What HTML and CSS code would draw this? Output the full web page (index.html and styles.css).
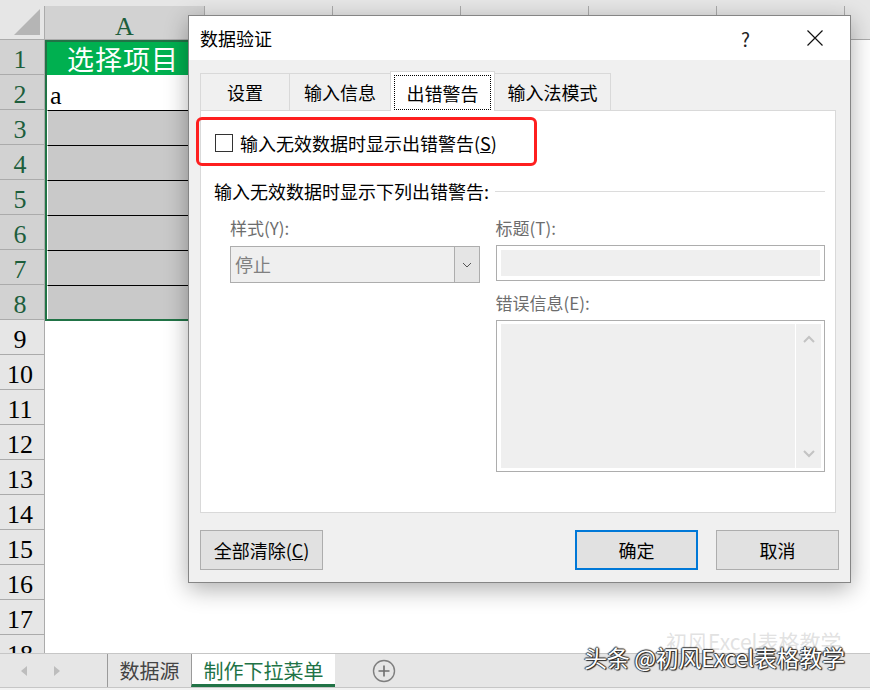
FILE: index.html
```html
<!DOCTYPE html>
<html lang="zh-CN">
<head>
    <meta charset="UTF-8">
    <title>数据验证</title>
    <link rel="stylesheet" href="styles.css">
</head>
<body>
    <div class="sheet">
        <div class="top-strip"></div>
        <div class="col-heads">
            <div class="corner">
                <svg width="28" height="28" viewBox="0 0 28 28"><polygon points="27,1 27,27 1,27" fill="#b5b5b5"/></svg>
            </div>
            <div class="col-head sel">A</div>
            <div class="col-head"></div>
            <div class="col-head"></div>
            <div class="col-head"></div>
            <div class="col-head"></div>
            <div class="col-head"></div>
            <div class="col-head"></div>
        </div>
        <div class="grid">
            <div class="row-heads">
                <div class="rh sel">1</div>
                <div class="rh sel">2</div>
                <div class="rh sel">3</div>
                <div class="rh sel">4</div>
                <div class="rh sel">5</div>
                <div class="rh sel">6</div>
                <div class="rh sel">7</div>
                <div class="rh sel">8</div>
                <div class="rh">9</div>
                <div class="rh">10</div>
                <div class="rh">11</div>
                <div class="rh">12</div>
                <div class="rh">13</div>
                <div class="rh">14</div>
                <div class="rh">15</div>
                <div class="rh">16</div>
                <div class="rh">17</div>
                <div class="rh">18</div>
            </div>
            <div class="cells">
                <div class="selection">
                    <div class="cell head-cell">选择项目</div>
                    <div class="cell value-cell">a</div>
                    <div class="cell filled"></div>
                    <div class="cell filled"></div>
                    <div class="cell filled"></div>
                    <div class="cell filled"></div>
                    <div class="cell filled"></div>
                    <div class="cell filled last"></div>
                </div>
            </div>
        </div>
        <div class="tab-bar">
            <div class="nav">
                <svg width="8" height="12" viewBox="0 0 8 12"><polygon points="7,1 7,11 1,6" fill="#bdbdbd"/></svg>
                <svg width="8" height="12" viewBox="0 0 8 12"><polygon points="1,1 1,11 7,6" fill="#bdbdbd"/></svg>
            </div>
            <div class="sheet-tab">数据源</div>
            <div class="sheet-tab active">制作下拉菜单</div>
            <div class="add-sheet">
                <svg width="24" height="24" viewBox="0 0 24 24"><circle cx="12" cy="12" r="10.5" fill="none" stroke="#7f7f7f" stroke-width="1.4"/><path d="M12 6.5v11M6.5 12h11" stroke="#6f6f6f" stroke-width="1.6"/></svg>
            </div>
        </div>
        <div class="status-line"></div>
    </div>

    <div class="dialog">
        <div class="dlg-title">
            <span class="dlg-name">数据验证</span>
            <span class="dlg-help">?</span>
            <svg class="dlg-close" width="16" height="16" viewBox="0 0 16 16"><path d="M0.5 0.5L15.5 15.5M15.5 0.5L0.5 15.5" stroke="#111" stroke-width="1.2"/></svg>
        </div>
        <div class="dlg-body">
            <div class="tabs">
                <div class="tab t1">设置</div>
                <div class="tab t2">输入信息</div>
                <div class="tab t3 active"><span class="focus">出错警告</span></div>
                <div class="tab t4">输入法模式</div>
            </div>
            <div class="panel">
                <div class="check-row">
                    <span class="checkbox"></span>
                    <span>输入无效数据时显示出错警告(<u>S</u>)</span>
                </div>
                <div class="group-head">
                    <span>输入无效数据时显示下列出错警告:</span>
                    <span class="group-line"></span>
                </div>
                <div class="form">
                    <div class="form-col left">
                        <div class="label">样式(Y):</div>
                        <div class="select">
                            <span class="select-text">停止</span>
                            <span class="select-btn">
                                <svg width="10" height="6" viewBox="0 0 10 6"><polyline points="1,1 5,5 9,1" fill="none" stroke="#555" stroke-width="1"/></svg>
                            </span>
                        </div>
                    </div>
                    <div class="form-col right">
                        <div class="label">标题(T):</div>
                        <div class="input"></div>
                        <div class="label second">错误信息(E):</div>
                        <div class="textarea">
                            <div class="text-fill"></div>
                            <div class="scroll">
                                <svg width="12" height="8" viewBox="0 0 12 8"><polyline points="1,7 6,2 11,7" fill="none" stroke="#c3c3c3" stroke-width="2"/></svg>
                                <svg width="12" height="8" viewBox="0 0 12 8"><polyline points="1,1 6,6 11,1" fill="none" stroke="#c3c3c3" stroke-width="2"/></svg>
                            </div>
                        </div>
                    </div>
                </div>
            </div>
            <div class="buttons">
                <button class="btn">全部清除(<u>C</u>)</button>
                <span class="spacer"></span>
                <button class="btn primary">确定</button>
                <button class="btn">取消</button>
            </div>
        </div>
    </div>

    <div class="highlight"></div>

    <div class="watermark">
        <span class="wm-faint">初风Excel表格教学</span>
        <span class="wm-main">头条 @初风Excel表格教学</span>
    </div>
</body>
</html>
```

FILE: styles.css
```css
body {
    margin: 0;
    width: 870px;
    height: 690px;
    overflow: hidden;
    position: relative;
    background: #fff;
    font-family: "Noto Sans CJK SC", sans-serif;
}

/* worksheet */
.top-strip {
    height: 6px;
    background: #e6e6e6;
}

.col-heads {
    display: flex;
    height: 34px;
    background: #e6e6e6;
    border-bottom: 1px solid #ababab;
    box-sizing: border-box;
}

.corner {
    width: 45px;
    flex: none;
    box-sizing: border-box;
    border-right: 1px solid #ababab;
    display: flex;
    align-items: flex-end;
    justify-content: flex-end;
    padding: 0 3px 3px 0;
}

.col-head {
    width: 128px;
    flex: none;
    box-sizing: border-box;
    border-right: 1px solid #ababab;
}

.col-head.sel {
    width: 160px;
    background: #d2d2d2;
    color: #1d5e3c;
    font-family: "Liberation Serif", serif;
    font-size: 26px;
    line-height: 33px;
    padding-top: 4px;
    box-sizing: border-box;
    text-align: center;
}

.grid {
    display: flex;
    height: 613px;
    overflow: hidden;
}

.row-heads {
    width: 45px;
    flex: none;
    background: #e6e6e6;
    border-right: 1px solid #ababab;
    box-sizing: border-box;
}

.rh {
    height: 35px;
    box-sizing: border-box;
    border-bottom: 1px solid #ababab;
    font-family: "Liberation Serif", serif;
    font-size: 26px;
    line-height: 34px;
    text-align: center;
    padding: 3px 4px 0 0;
    color: #000;
}

.rh.sel {
    background: #d2d2d2;
    color: #1d5e3c;
}

.cells {
    flex: 1;
}

.selection {
    width: 160px;
    border: 2px solid #217346;
    border-right: none;
}

.cell {
    height: 35px;
    box-sizing: border-box;
}

.head-cell {
    height: 33px;
    background: #00b050;
    color: #fff;
    font-family: "Liberation Serif", "Noto Sans CJK SC", serif;
    font-size: 27px;
    line-height: 33px;
    padding: 3px 0 0 20px;
    letter-spacing: 1px;
    overflow: hidden;
}

.value-cell {
    border-left: 1px solid #fff;
    font-family: "Liberation Serif", serif;
    font-size: 26px;
    line-height: 34px;
    padding: 4px 0 0 2px;
}

.filled {
    background: #c9c9c9;
    border-top: 1px solid #000;
    border-left: 1px solid #fff;
}

.filled.last {
    height: 34px;
}

.tab-bar {
    display: flex;
    align-items: center;
    height: 34px;
    background: #e6e6e6;
    border-top: 1px solid #c6c6c6;
    box-sizing: border-box;
}

.nav {
    width: 107px;
    flex: none;
    display: flex;
    gap: 25px;
    padding-left: 20px;
    box-sizing: border-box;
}

.sheet-tab {
    height: 33px;
    box-sizing: border-box;
    display: flex;
    align-items: center;
    justify-content: center;
    font-size: 20px;
    color: #444;
    border-left: 1px solid #9a9a9a;
    width: 84px;
}

.sheet-tab.active {
    width: 144px;
    background: #fff;
    color: #217346;
    border-bottom: 3px solid #217346;
    padding-top: 2px;
}

.add-sheet {
    margin-left: 37px;
    display: flex;
}

.status-line {
    height: 3px;
    border-top: 1px solid #c6c6c6;
    background: #f2f2f2;
}

/* dialog */
.dialog {
    position: absolute;
    left: 188px;
    top: 15px;
    width: 663px;
    height: 568px;
    box-sizing: border-box;
    border: 1px solid #858585;
    background: #f0f0f0;
    box-shadow: 0 6px 22px rgba(0, 0, 0, 0.32);
    display: flex;
    flex-direction: column;
}

.dlg-title {
    height: 44px;
    flex: none;
    background: #fff;
    display: flex;
    align-items: center;
    padding-left: 11px;
    font-size: 18px;
    color: #000;
}

.dlg-name {
    flex: 1;
}

.dlg-help {
    font-size: 19px;
    color: #222;
    margin-right: 57px;
}

.dlg-close {
    margin-right: 27px;
}

.dlg-body {
    padding: 11px 11px 0 11px;
}

.tabs {
    display: flex;
    align-items: flex-end;
    height: 39px;
}

.tab {
    height: 37px;
    box-sizing: border-box;
    border: 1px solid #d9d9d9;
    border-bottom: none;
    display: flex;
    align-items: center;
    justify-content: center;
    font-size: 18px;
    color: #000;
    margin-left: -1px;
}

.t1 { width: 90px; margin-left: 0; }
.t2 { width: 102px; }
.t3 { width: 105px; }
.t4 { width: 117px; }

.tab.active {
    height: 40px;
    margin-bottom: -1px;
    background: #fff;
    position: relative;
    z-index: 1;
    padding: 3px 3px 1px;
    align-items: stretch;
}

.focus {
    flex: 1;
    border: 1px dotted #000;
    display: flex;
    align-items: center;
    justify-content: center;
}

.panel {
    width: 636px;
    height: 403px;
    box-sizing: border-box;
    border: 1px solid #d9d9d9;
    background: #fff;
    padding: 21px 10px 0 14px;
}

.check-row {
    display: flex;
    align-items: center;
    gap: 7px;
    height: 22px;
    font-size: 18px;
    color: #000;
}

.checkbox {
    width: 18px;
    height: 18px;
    box-sizing: border-box;
    border: 1px solid #333;
    background: #fff;
}

.group-head {
    display: flex;
    align-items: center;
    margin-top: 25px;
    margin-left: -1px;
    height: 24px;
    font-size: 18px;
    color: #000;
}

.group-line {
    flex: 1;
    height: 1px;
    background: #dcdcdc;
    margin-left: 6px;
}

.form {
    display: flex;
    gap: 16px;
    margin-top: 13px;
    margin-left: 15px;
}

.form-col.left { width: 250px; }
.form-col.right { width: 330px; }

.label {
    font-size: 17px;
    line-height: 24px;
    color: #6d6d6d;
}

.label.second {
    margin-top: 10px;
}

.select {
    margin-top: 6px;
    height: 37px;
    box-sizing: border-box;
    border: 1px solid #adadad;
    background: #efefef;
    display: flex;
    align-items: stretch;
}

.select-text {
    flex: 1;
    padding-left: 4px;
    font-size: 18px;
    line-height: 35px;
    color: #808080;
}

.select-btn {
    width: 25px;
    box-sizing: border-box;
    border-left: 1px solid #adadad;
    background: #e5e5e5;
    display: flex;
    align-items: center;
    justify-content: center;
}

.input {
    margin-top: 5px;
    height: 36px;
    box-sizing: border-box;
    border: 1px solid #adadad;
    background: #efefef;
    box-shadow: inset 0 0 0 4px #fff;
}

.textarea {
    margin-top: 5px;
    height: 152px;
    box-sizing: border-box;
    border: 1px solid #adadad;
    padding: 3px 3px 3px 4px;
    display: flex;
    gap: 1px;
    background: #fff;
}

.text-fill {
    flex: 1;
    background: #efefef;
}

.scroll {
    width: 25px;
    background: #efefef;
    display: flex;
    flex-direction: column;
    justify-content: space-between;
    align-items: center;
    padding: 11px 0 10px;
}

.buttons {
    display: flex;
    gap: 18px;
    margin-top: 17px;
}

.spacer {
    flex: 1;
}

.btn {
    width: 123px;
    height: 40px;
    box-sizing: border-box;
    border: 1px solid #adadad;
    background: #e1e1e1;
    font-family: "Noto Sans CJK SC", sans-serif;
    font-size: 18px;
    color: #000;
    padding: 0;
}

.btn.primary {
    border: 2px solid #0078d7;
}

/* red mark drawn over the dialog */
.highlight {
    position: absolute;
    left: 196px;
    top: 117px;
    width: 341px;
    height: 49px;
    box-sizing: border-box;
    border: 3px solid #fe1f1f;
    border-radius: 6px;
}

.watermark {
    position: absolute;
    left: 584px;
    top: 628px;
    width: 280px;
    height: 50px;
}

.wm-faint {
    position: absolute;
    left: 82px;
    top: 0;
    font-size: 21px;
    line-height: 26px;
    color: rgba(190, 190, 190, 0.45);
    white-space: nowrap;
}

.wm-main {
    position: absolute;
    left: 0;
    top: 14px;
    font-size: 23px;
    line-height: 30px;
    letter-spacing: -0.3px;
    color: #fff;
    white-space: nowrap;
    text-shadow: 1px 1px 1px #222, -1px 0 1px #333, 0 -1px 1px #333, 1px 0 1px #333;
}
```
